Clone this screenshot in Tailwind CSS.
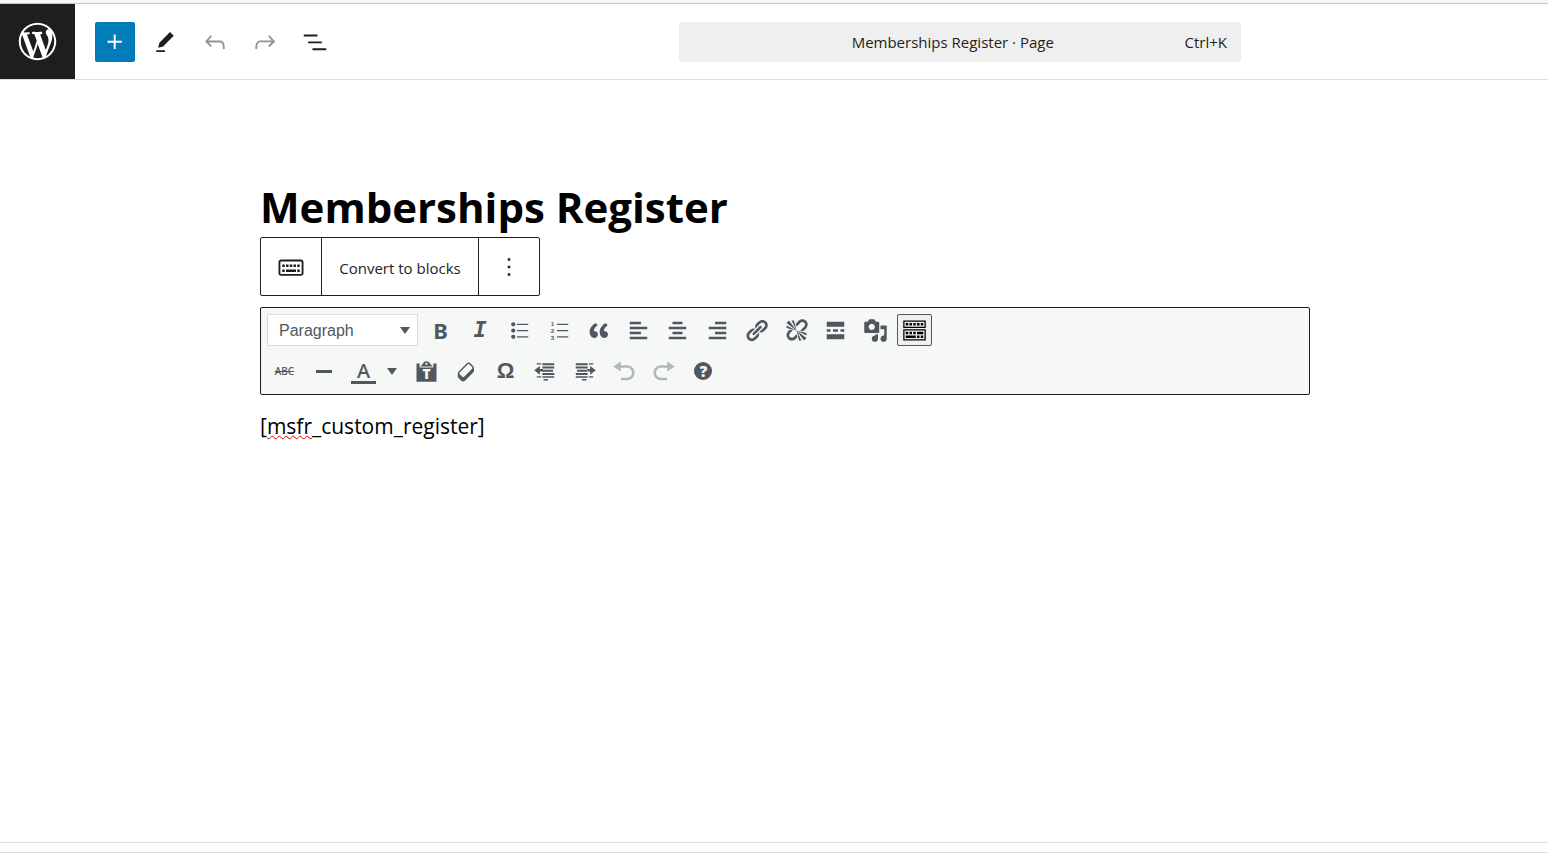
<!DOCTYPE html>
<html lang="en">
<head>
  <meta charset="UTF-8" />
  <meta name="viewport" content="width=device-width, initial-scale=1.0" />
  <title>Edit Page - Memberships Register</title>
  <script src="https://cdn.jsdelivr.net/npm/@tailwindcss/browser@4"></script>
</head>
<body class="min-h-screen flex flex-col bg-white text-[#1e1e1e] font-['Open_Sans','Noto_Sans',sans-serif]">

  <!-- Browser edge -->
  <div class="h-1 bg-[#f7f7fa] border-b border-[#c8c8cc]"></div>

  <!-- Header -->
  <header class="flex items-center h-19 border-b border-[#dddddd]">
    <a href="#" aria-label="View Pages" class="flex items-center justify-center self-stretch w-[75px] bg-[#1e1e1e] text-white">
      <svg class="size-[45px]" viewBox="-2 -2 24 24" fill="currentColor"><path d="M20 10c0-5.51-4.49-10-10-10C4.48 0 0 4.49 0 10c0 5.52 4.48 10 10 10 5.51 0 10-4.48 10-10zM7.78 15.37L4.37 6.22c.55-.02 1.17-.08 1.17-.08.5-.06.44-1.13-.06-1.11 0 0-1.45.11-2.37.11-.18 0-.37 0-.58-.01C4.12 2.69 6.87 1.11 10 1.11c2.33 0 4.45.87 6.05 2.34-.68-.11-1.65.39-1.65 1.58 0 .74.45 1.36.9 2.1.35.61.55 1.36.55 2.46 0 1.49-1.4 5-1.4 5l-3.03-8.37c.54-.02.82-.17.82-.17.5-.05.44-1.25-.06-1.22 0 0-1.44.12-2.38.12-.87 0-2.33-.12-2.33-.12-.5-.03-.56 1.2-.06 1.22l.92.08 1.26 3.41zM17.41 10c.24-.64.74-1.87.43-4.25.7 1.29 1.05 2.71 1.05 4.25 0 3.29-1.73 6.24-4.4 7.78.97-2.59 1.94-5.2 2.92-7.78zM6.1 18.09C3.12 16.65 1.11 13.53 1.11 10c0-1.3.23-2.48.72-3.59C3.25 10.3 4.67 14.2 6.1 18.09zm4.03-6.63l2.58 6.98c-.86.29-1.76.45-2.71.45-.79 0-1.57-.11-2.29-.33.81-2.38 1.62-4.74 2.42-7.1z"/></svg>
    </a>
    <div class="flex gap-[10px] ml-5">
      <button aria-label="Toggle block inserter" class="flex items-center justify-center size-10 rounded-xs bg-[#007cba] text-white">
        <svg class="size-[30px]" viewBox="0 0 24 24" fill="currentColor"><path d="M11 12.5V17.5H12.5V12.5H17.5V11H12.5V6H11V11H6V12.5H11Z"/></svg>
      </button>
      <button aria-label="Tools" class="flex items-center justify-center size-10">
        <svg class="size-[30px]" viewBox="0 0 24 24" fill="currentColor"><path d="m19 7-3-3-8.5 8.5-1 4 4-1L19 7Zm-7 11.5H5V20h7v-1.5Z"/></svg>
      </button>
      <button aria-label="Undo" class="flex items-center justify-center size-10 text-[#949494]">
        <svg class="size-[30px]" viewBox="0 0 24 24" fill="currentColor"><path d="M18.3 11.7c-.6-.6-1.4-.9-2.3-.9H6.7l2.9-3.3-1.1-1-4.5 5L8.5 16l1-1-2.7-2.7H16c.5 0 .9.2 1.3.5 1 1 1 3.4 1 4.5v.3h1.5v-.2c0-1.5 0-4.3-1.5-5.7z"/></svg>
      </button>
      <button aria-label="Redo" class="flex items-center justify-center size-10 text-[#949494]">
        <svg class="size-[30px]" viewBox="0 0 24 24" fill="currentColor"><path d="M15.6 6.5l-1.1 1 2.9 3.3H8c-.9 0-1.7.3-2.3.9-1.4 1.5-1.4 4.2-1.4 5.6v.2h1.5v-.3c0-1.1 0-3.5 1-4.5.3-.3.7-.5 1.3-.5h9.2L14.5 15l1.1 1.1 4.6-4.6-4.6-5z"/></svg>
      </button>
      <button aria-label="Document overview" class="flex items-center justify-center size-10">
        <svg class="size-[30px]" viewBox="0 0 24 24" fill="currentColor"><path d="M3 6h11v1.5H3V6Zm3.5 5.5h11V13h-11v-1.5ZM21 17H10v1.5h11V17Z"/></svg>
      </button>
    </div>
    <button class="flex items-center w-[562px] h-10 ml-auto mr-[307px] px-[14px] pt-[2px] rounded bg-[#efefef] text-[15px]">
      <span class="flex-1 pl-7">Memberships Register · Page</span>
      <span>Ctrl+K</span>
    </button>
  </header>

  <!-- Canvas -->
  <main class="flex-1 pl-[260px] pr-[238px] pt-[99px]">
    <h1 class="text-[42px] leading-14 font-bold text-black">Memberships Register</h1>

    <!-- Block toolbar -->
    <div class="flex w-fit h-[59px] mt-[2px] border border-[#1e1e1e] rounded-xs">
      <button aria-label="Classic" class="flex items-center justify-center w-15">
        <svg class="size-[30px]" viewBox="0 0 24 24" fill="currentColor"><path d="M20 6H4c-1.1 0-2 .9-2 2v9c0 1.1.9 2 2 2h16c1.1 0 2-.9 2-2V8c0-1.1-.9-2-2-2zm.5 11c0 .3-.2.5-.5.5H4c-.3 0-.5-.2-.5-.5V8c0-.3.2-.5.5-.5h16c.3 0 .5.2.5.5v9zM10 10H8v2h2v-2zm-5 2h2v-2H5v2zm8-2h-2v2h2v-2zm-5 6h8v-2H8v2zm6-4h2v-2h-2v2zm3 0h2v-2h-2v2zm0 4h2v-2h-2v2zM5 16h2v-2H5v2z"/></svg>
      </button>
      <button class="w-[158px] pt-1 border-x border-[#1e1e1e] text-[15px]">Convert to blocks</button>
      <button aria-label="Options" class="flex items-center justify-center w-15">
        <svg class="size-[30px]" viewBox="0 0 24 24" fill="currentColor"><path d="M13 19h-2v-2h2v2zm0-6h-2v-2h2v2zm0-6h-2V5h2v2z"/></svg>
      </button>
    </div>

    <!-- Classic editor toolbar -->
    <div class="flex flex-col gap-[9px] h-22 mt-[11px] p-[6px] border border-[#1e1e1e] rounded-xs bg-[#f5f8f7] text-[#50575e]">
      <div class="flex items-center gap-[5px]">
        <div class="relative w-[151px] h-8">
          <select aria-label="Format" class="appearance-none size-full pl-[11px] pt-px border border-[#dcdcde] bg-white text-base font-['Liberation_Sans',sans-serif]">
            <option>Paragraph</option>
            <option>Heading 1</option>
            <option>Heading 2</option>
            <option>Preformatted</option>
          </select>
          <svg class="absolute right-2 top-[13px] w-[10px] h-[7px] pointer-events-none" viewBox="0 0 10 7" fill="currentColor"><path d="M0 0h10L5 7z"/></svg>
        </div>
        <div class="flex justify-between w-[509px]">
          <button aria-label="Bold" class="w-[35px] h-8 text-[22px] leading-[30px] font-bold font-['Noto_Sans',sans-serif]">B</button>
          <button aria-label="Italic" class="w-[35px] h-8 text-[22px] leading-8 font-bold italic font-['DejaVu_Sans_Mono',monospace]">I</button>
          <button aria-label="Bulleted list" class="flex items-center justify-center w-[35px] h-8">
            <svg class="size-[25px]" viewBox="0 0 20 20" fill="currentColor"><circle cx="5" cy="5" r="1.7"/><circle cx="5" cy="10" r="1.7"/><circle cx="5" cy="15" r="1.7"/><path d="M8 4.5h9v1H8zM8 9.5h9v1H8zM8 14.5h9v1H8z"/></svg>
          </button>
          <button aria-label="Numbered list" class="flex items-center justify-center w-[35px] h-8">
            <svg class="size-[25px] font-['Liberation_Sans',sans-serif]" viewBox="0 0 20 20" fill="currentColor"><path d="M8 4.5h9v1H8zM8 9.5h9v1H8zM8 14.5h9v1H8z"/><text x="3" y="6.500" font-size="5" font-weight="700">1</text><text x="3" y="12" font-size="5" font-weight="700">2</text><text x="3" y="17.500" font-size="5" font-weight="700">3</text></svg>
          </button>
          <button aria-label="Blockquote" class="flex items-center justify-center w-[35px] h-8">
            <svg class="size-[25px]" viewBox="0 0 20 20" fill="currentColor"><path d="M9.49 13.22c0-.74-.2-1.38-.61-1.9-.62-.78-1.83-.88-2.53-.72-.29-1.65 1.11-3.75 2.92-4.65L7.88 4c-2.73 1.3-5.42 4.28-4.96 8.05C3.21 14.43 4.59 16 6.54 16c.85 0 1.56-.25 2.12-.75s.83-1.18.83-2.03zm8.05 0c0-.74-.2-1.38-.61-1.9-.63-.78-1.83-.88-2.53-.72-.29-1.65 1.11-3.75 2.92-4.65L15.93 4c-2.73 1.3-5.41 4.28-4.95 8.05.29 2.38 1.66 3.95 3.61 3.95.85 0 1.56-.25 2.12-.75s.83-1.18.83-2.03z"/></svg>
          </button>
          <button aria-label="Align left" class="flex items-center justify-center w-[35px] h-8">
            <svg class="size-[25px]" viewBox="0 0 20 20" fill="currentColor"><path d="M12 5V3H3v2h9zm5 4V7H3v2h14zm-5 4v-2H3v2h9zm5 4v-2H3v2h14z"/></svg>
          </button>
          <button aria-label="Align center" class="flex items-center justify-center w-[35px] h-8">
            <svg class="size-[25px]" viewBox="0 0 20 20" fill="currentColor"><path d="M14 5V3H6v2h8zm3 4V7H3v2h14zm-3 4v-2H6v2h8zm3 4v-2H3v2h14z"/></svg>
          </button>
          <button aria-label="Align right" class="flex items-center justify-center w-[35px] h-8">
            <svg class="size-[25px]" viewBox="0 0 20 20" fill="currentColor"><path d="M17 5V3H8v2h9zm0 4V7H3v2h14zm0 4v-2H8v2h9zm0 4v-2H3v2h14z"/></svg>
          </button>
          <button aria-label="Insert link" class="flex items-center justify-center w-[35px] h-8">
            <svg class="size-[25px]" viewBox="0 0 20 20" fill="currentColor"><path d="M17.74 2.76c1.68 1.69 1.68 4.41 0 6.1l-1.53 1.52c-1.12 1.12-2.7 1.47-4.14 1.09l2.62-2.61.76-.77.76-.76c.84-.84.84-2.2 0-3.04-.84-.85-2.2-.85-3.04 0l-.77.76-3.38 3.38c-.37-1.44-.02-3.02 1.1-4.14l1.52-1.53c1.69-1.68 4.42-1.68 6.1 0zM8.59 13.43l5.34-5.34c.42-.42.42-1.1 0-1.52-.44-.43-1.13-.39-1.53 0l-5.33 5.34c-.42.42-.42 1.1 0 1.52.44.43 1.13.39 1.52 0zm-.76 2.29l4.14-4.15c.38 1.44.03 3.02-1.09 4.14l-1.52 1.53c-1.69 1.68-4.41 1.68-6.1 0-1.68-1.68-1.68-4.42 0-6.1l1.53-1.52c1.12-1.12 2.7-1.47 4.14-1.1l-4.14 4.15c-.85.84-.85 2.2 0 3.05.84.84 2.2.84 3.04 0z"/></svg>
          </button>
          <button aria-label="Remove link" class="flex items-center justify-center w-[35px] h-8">
            <svg class="size-[25px]" viewBox="0 0 20 20" fill="currentColor"><path d="M17.74 2.26c1.68 1.69 1.68 4.41 0 6.1l-1.53 1.52c-.32.33-.69.58-1.08.77L13 10l1.69-1.64.76-.77.76-.76c.84-.84.84-2.2 0-3.04-.84-.85-2.2-.85-3.04 0l-.77.76-.76.76L10 7l-.65-2.14c.19-.38.44-.75.77-1.07l1.52-1.53c1.69-1.68 4.42-1.68 6.1 0zM2 4l8 6-6-8zm4-2l4 8-2-8H6zM2 6l8 4-8-2V6zm7.36 7.69L10 13l.74 2.35-1.38 1.39c-1.69 1.68-4.41 1.68-6.1 0-1.68-1.68-1.68-4.42 0-6.1l1.39-1.38L7 10l-.69.64-1.52 1.53c-.85.84-.85 2.2 0 3.04.84.85 2.2.85 3.04 0zM18 16l-8-6 6 8zm-4 2l-4-8 2 8h2zm4-4l-8-4 8 2v2z"/></svg>
          </button>
          <button aria-label="Read more tag" class="flex items-center justify-center w-[35px] h-8">
            <svg class="size-[25px]" viewBox="0 0 20 20" fill="currentColor"><path d="M17 7V3H3v4h14zM6 11V9H3v2h3zm6 0V9H8v2h4zm5 0V9h-3v2h3zm0 6v-4H3v4h14z"/></svg>
          </button>
          <button aria-label="Add media" class="flex items-center justify-center w-[35px] h-8">
            <svg class="size-[25px]" viewBox="0 0 20 20" fill="currentColor"><path d="M13 11V4c0-.55-.45-1-1-1h-1.67L9 1H5L3.67 3H2c-.55 0-1 .45-1 1v7c0 .55.45 1 1 1h10c.55 0 1-.45 1-1zM7 4.5c1.38 0 2.5 1.12 2.5 2.5S8.38 9.5 7 9.5 4.5 8.38 4.5 7 5.62 4.5 7 4.5zM14 6h5v10.5c0 1.38-1.12 2.5-2.5 2.5S14 17.88 14 16.5s1.12-2.5 2.5-2.5c.17 0 .34.02.5.05V9h-3V6zm-4 8.05V13h2v3.5c0 1.38-1.12 2.5-2.5 2.5S7 17.88 7 16.5 8.12 14 9.5 14c.17 0 .34.02.5.05z"/></svg>
          </button>
          <button aria-label="Toolbar toggle" class="flex items-center justify-center w-[35px] h-8 border border-[#50575e] rounded-xs bg-[#f0f0f1] text-black">
            <svg class="size-[25px] shrink-0" viewBox="0 0 20 20" fill="currentColor"><path d="M19 2v6H1V2h18zm-1 5V3H2v4h16zM5 4v2H3V4h2zm3 0v2H6V4h2zm3 0v2H9V4h2zm3 0v2h-2V4h2zm3 0v2h-2V4h2zm2 5v9H1V9h18zm-1 8v-7H2v7h16zM5 11v2H3v-2h2zm3 0v2H6v-2h2zm3 0v2H9v-2h2zm6 0v2h-5v-2h5zm-6 3v2H3v-2h8zm3 0v2h-2v-2h2zm3 0v2h-2v-2h2z"/></svg>
          </button>
        </div>
      </div>
      <div class="flex items-center">
        <button aria-label="Strikethrough" class="w-[35px] h-8 text-[10px] font-medium line-through font-['Noto_Sans',sans-serif]">ABC</button>
        <button aria-label="Horizontal line" class="flex items-center justify-center w-[35px] h-8 ml-1">
          <svg class="w-4 h-[3px]" viewBox="0 0 16 3" fill="currentColor"><path d="M0 0h16v3H0z"/></svg>
        </button>
        <button aria-label="Text color" class="flex justify-center w-[35px] h-8 ml-[5px]">
          <span class="w-[25px] h-[29px] border-b-3 border-[#50575e] text-xl leading-8 font-medium font-['Noto_Sans',sans-serif]">A</span>
        </button>
        <button aria-label="Text color options" class="flex items-center justify-center w-[22px] h-8">
          <svg class="w-[10px] h-[7px]" viewBox="0 0 10 7" fill="currentColor"><path d="M0 0h10L5 7z"/></svg>
        </button>
        <div class="flex justify-between w-[312px] ml-[6px]">
          <button aria-label="Paste as text" class="flex items-center justify-center w-[35px] h-8">
            <svg class="size-[25px] font-['Noto_Sans',sans-serif]" viewBox="0 0 20 20" fill="currentColor"><path fill-rule="evenodd" d="M7 4C7.4 2.500 8.500 1.700 10 1.700s2.600.8 3 2.300l2 2H5zM10 2.900a.9.9 0 1 0 0 1.800.9.9 0 0 0 0-1.800z"/><path d="M2 3.500h2.500v3.300h11V3.500H18v14.700H2z"/><text x="10" y="15.800" font-size="11" font-weight="900" text-anchor="middle" fill="#f5f8f7">T</text></svg>
          </button>
          <button aria-label="Clear formatting" class="flex items-center justify-center w-[35px] h-8">
            <svg class="size-[25px]" viewBox="0 0 20 20" fill="currentColor"><path d="M14.29 4.59l1.1 1.11c.41.4.61.94.61 1.47v2.12c0 .53-.2 1.07-.61 1.47l-6.63 6.63c-.4.41-.94.61-1.47.61s-1.07-.2-1.47-.61l-1.11-1.1-1.1-1.11c-.41-.4-.61-.94-.61-1.47v-2.12c0-.54.2-1.07.61-1.48l6.63-6.62c.4-.41.94-.61 1.47-.61s1.06.2 1.47.61zm-6.21 9.7l6.42-6.42c.39-.39.39-1.03 0-1.43L12.36 4.3c-.19-.19-.45-.29-.72-.29s-.52.1-.71.29l-6.42 6.42c-.39.4-.39 1.04 0 1.43l2.14 2.14c.38.38 1.04.38 1.43 0z"/></svg>
          </button>
          <button aria-label="Special character" class="w-[35px] h-8 text-[22px] leading-8 font-bold font-['Liberation_Sans',sans-serif]">Ω</button>
          <button aria-label="Decrease indent" class="flex items-center justify-center w-[35px] h-8">
            <svg class="size-[25px]" viewBox="0 0 20 20" fill="currentColor"><path d="M3 3.300h3.500v1H3zM7.500 3.300H17v1.700H7.500zM7.500 5.900H17v1.700H7.500zM7.500 8.500H16v1.700H7.500zM7.500 11.100H17v1.700H7.500zM3 13.700h3.500v1H3zM7.500 13.700H17v1.300H7.500zM8.500 16h3.500v1.200H8.500zM1 9l4.500-3.500V8H8v2H5.500v2.500z"/></svg>
          </button>
          <button aria-label="Increase indent" class="flex items-center justify-center w-[35px] h-8">
            <svg class="size-[25px]" viewBox="0 0 20 20" fill="currentColor"><path d="M13.500 3.300H17v1h-3.500zM3 3.300h9.500v1.700H3zM3 5.900h9.500v1.700H3zM4 8.500h8.500v1.700H4zM3 11.100h9.500v1.700H3zM13.500 13.700H17v1h-3.500zM3 13.700h9.500v1.300H3zM8 16h3.500v1.200H8zM19 9l-4.500-3.500V8H12v2h2.500v2.500z"/></svg>
          </button>
          <button aria-label="Undo typing" class="flex items-center justify-center w-[35px] h-8 opacity-40">
            <svg class="size-[25px]" viewBox="0 0 20 20" fill="currentColor"><path d="M12 5H7V2L1 6l6 4V7h5c2.2 0 4 1.8 4 4s-1.8 4-4 4H7v2h5c3.3 0 6-2.7 6-6s-2.7-6-6-6z"/></svg>
          </button>
          <button aria-label="Redo typing" class="flex items-center justify-center w-[35px] h-8 opacity-40">
            <svg class="size-[25px]" viewBox="0 0 20 20" fill="currentColor"><path d="M8 5h5V2l6 4-6 4V7H8c-2.2 0-4 1.8-4 4s1.8 4 4 4h5v2H8c-3.3 0-6-2.7-6-6s2.7-6 6-6z"/></svg>
          </button>
          <button aria-label="Keyboard shortcuts" class="flex items-center justify-center w-[35px] h-8">
            <span class="size-[18px] rounded-full bg-[#50575e] text-[#f5f8f7] text-[15px] leading-[18px] font-black font-['Noto_Sans',sans-serif]">?</span>
          </button>
        </div>
      </div>
    </div>

    <p class="mt-[11px] text-[21px] leading-10 text-black">[<span class="underline decoration-wavy decoration-[#e00000] decoration-1">msfr</span>_custom_register]</p>
  </main>

  <!-- Footer -->
  <footer class="h-[21px] border-t border-[#dddddd]">
    <div class="h-[10px] border-b border-[#dddddd]"></div>
  </footer>
</body>
</html>
